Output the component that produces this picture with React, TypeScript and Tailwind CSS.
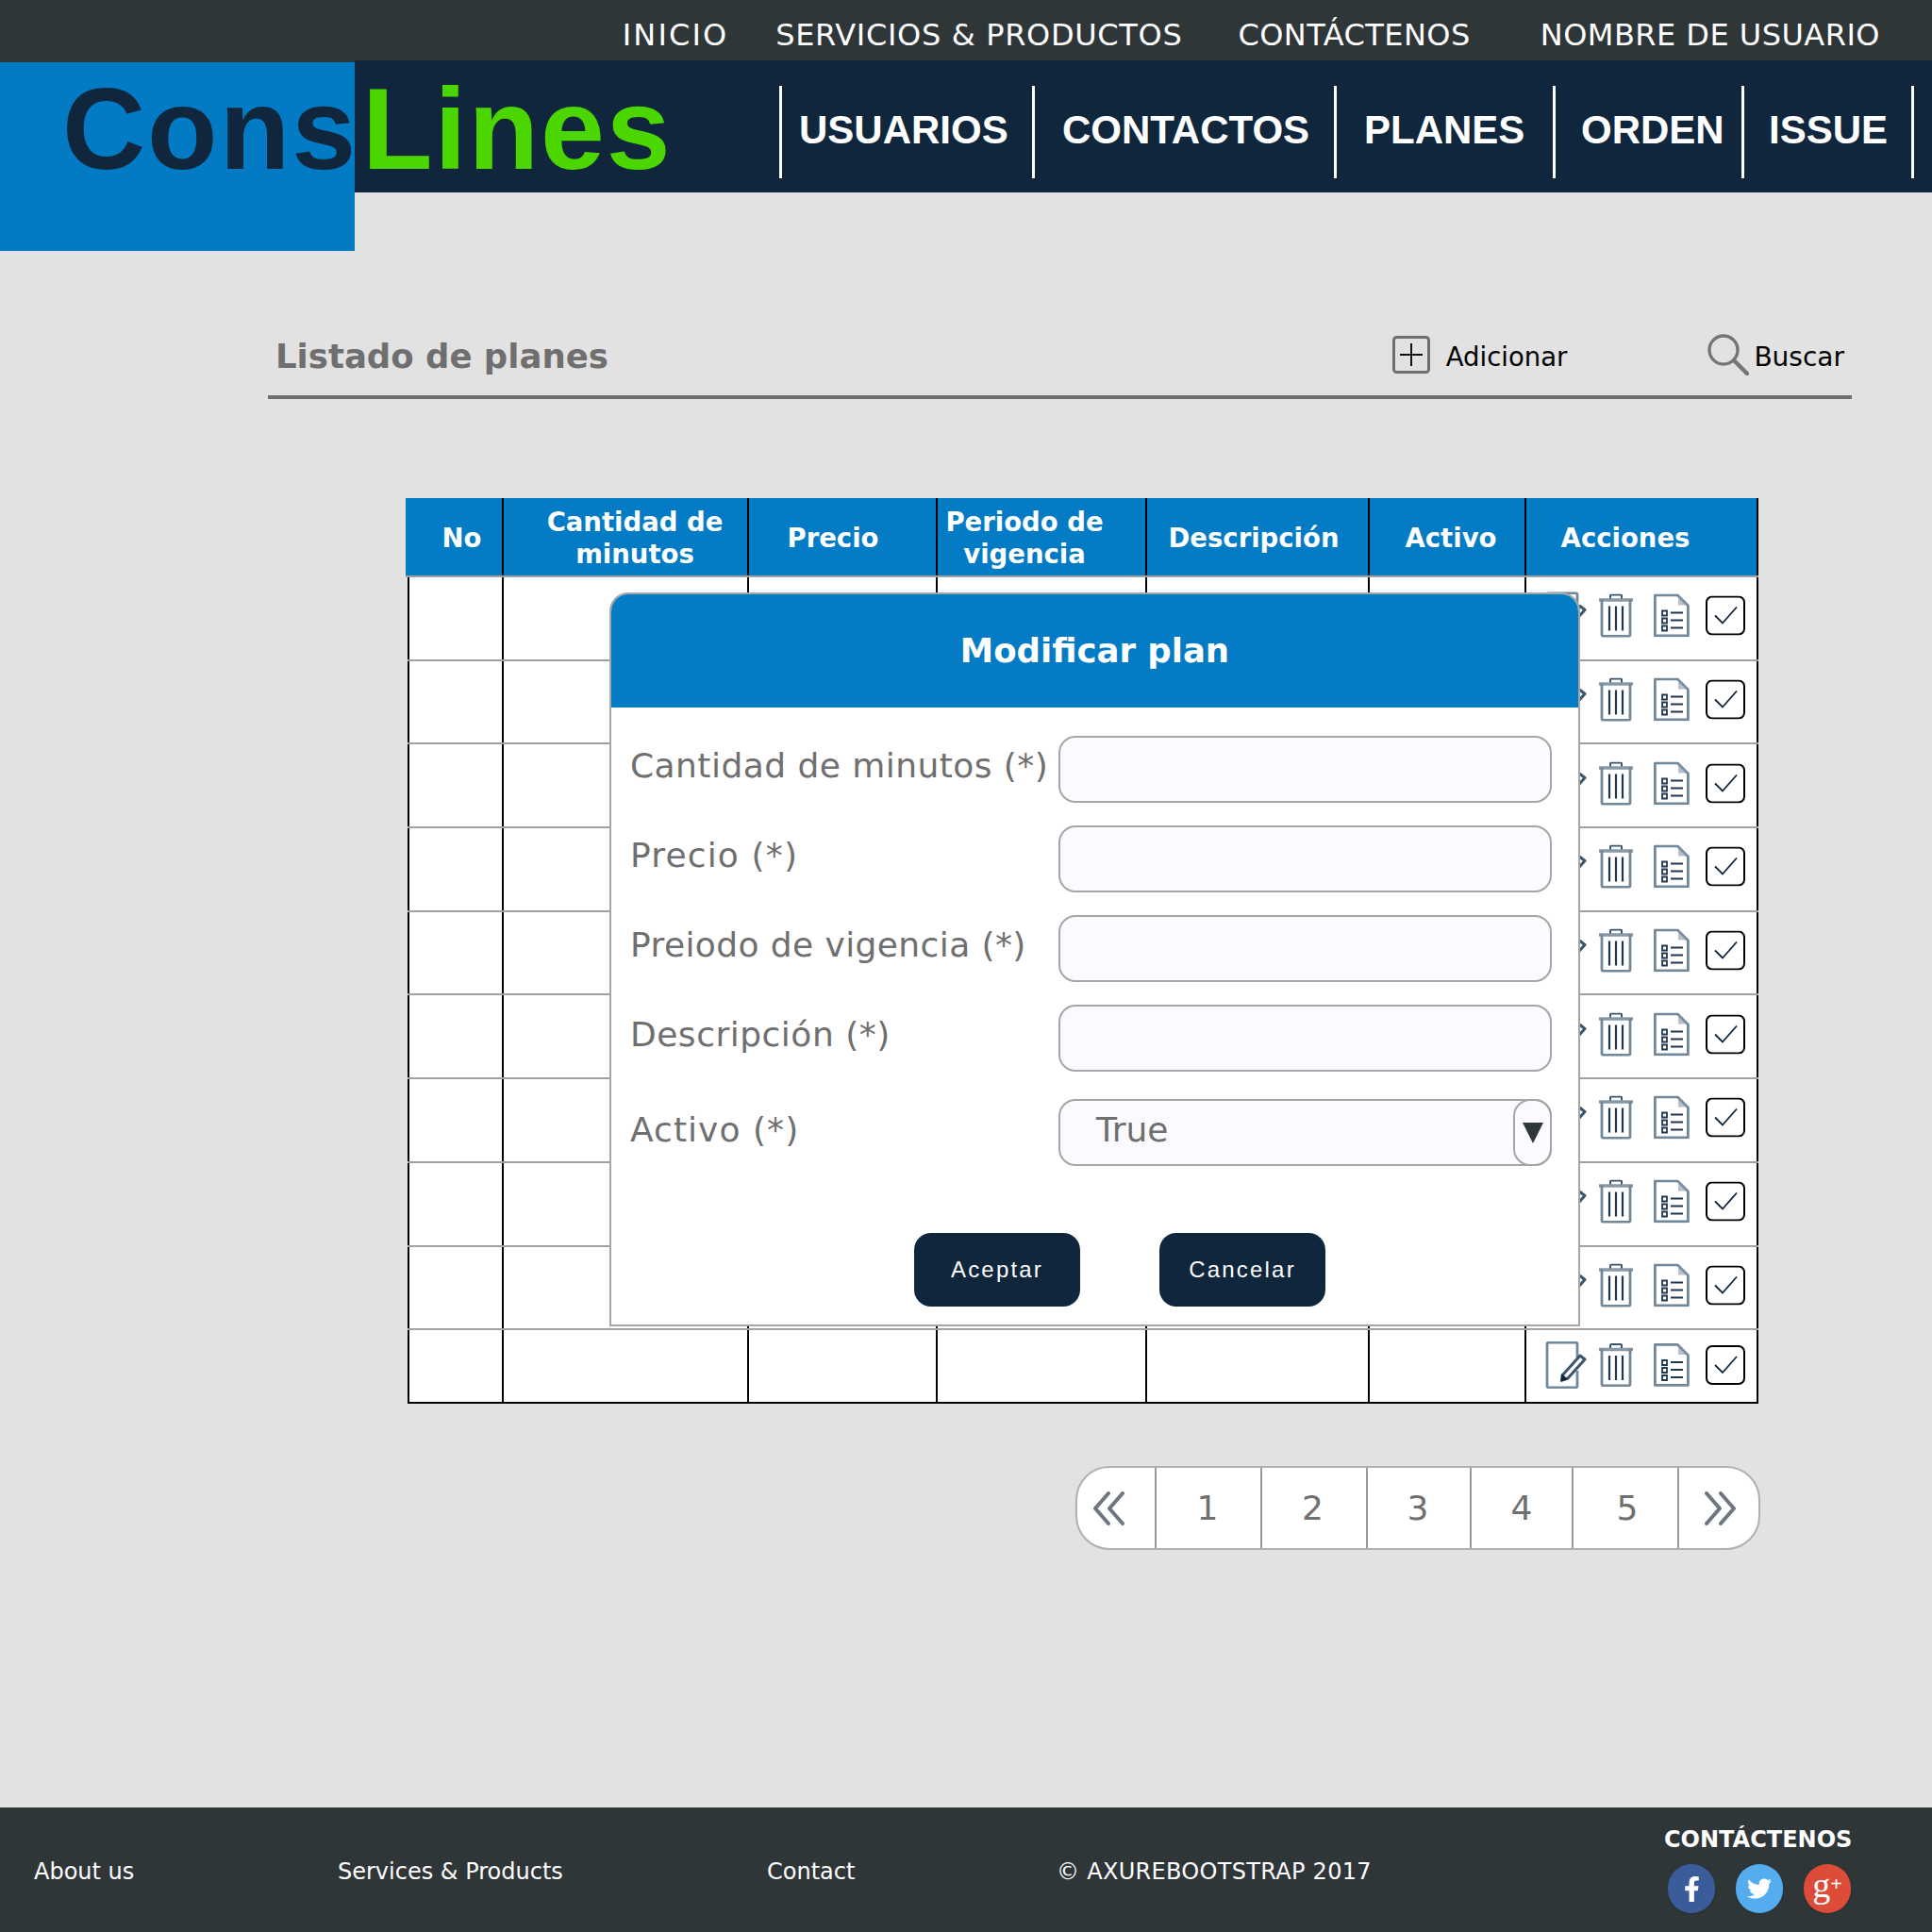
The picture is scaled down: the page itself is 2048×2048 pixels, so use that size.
import { FaFacebookF, FaTwitter } from 'react-icons/fa';

const topLinks = [
  { label: 'INICIO', cls: 'tracking-[2.1px]' },
  { label: 'SERVICIOS & PRODUCTOS', cls: 'ml-[50px] tracking-[0.67px]' },
  { label: 'CONTÁCTENOS', cls: 'ml-[59px] tracking-[0.45px]' },
  { label: 'NOMBRE DE USUARIO', cls: 'ml-[74px] tracking-[0.47px]' },
];

const navLinks = [
  { label: 'USUARIOS', cls: 'w-[268px] pl-[18px]' },
  { label: 'CONTACTOS', cls: 'w-[320px] pl-[29px]' },
  { label: 'PLANES', cls: 'w-[232px] pl-[29px]' },
  { label: 'ORDEN', cls: 'w-[200px] pl-[27px]' },
  { label: 'ISSUE', cls: 'w-[183px] pl-[26px] border-r-[3px]' },
];

const headerColumns = 'grid grid-cols-[104px_260px_200px_222px_236px_166px_246px]';
const bodyColumns = 'grid grid-cols-[102px_260px_200px_222px_236px_166px_246px]';

const headers = [
  { label: 'No', cls: 'pl-[17px] justify-center' },
  { label: 'Cantidad de minutos', cls: 'pl-[20px] justify-center' },
  { label: 'Precio', cls: 'pr-[20px] justify-center' },
  { label: 'Periodo de vigencia', cls: 'pr-[42px] justify-center' },
  { label: 'Descripción', cls: 'pr-[8px] justify-center' },
  { label: 'Activo', cls: 'pl-[8px] justify-center' },
  { label: 'Acciones', cls: 'pr-[34px] justify-center' },
];

const fields = [
  { label: 'Cantidad de minutos (*)', cls: 'mb-[24px]', text: 'tracking-[0.45px]' },
  { label: 'Precio (*)', cls: 'mb-[24px]', text: 'tracking-[1.15px]' },
  { label: 'Preiodo de vigencia (*)', cls: 'mb-[24px]', text: 'tracking-[0.4px]' },
  { label: 'Descripción (*)', cls: 'mb-[29px]', text: 'tracking-[0.5px]' },
];

const pages = [
  { n: '1', cls: 'w-[112px] pr-[2px]' },
  { n: '2', cls: 'w-[112px] pr-[3px]' },
  { n: '3', cls: 'w-[110px] pr-[2px]' },
  { n: '4', cls: 'w-[108px]' },
  { n: '5', cls: 'w-[112px] pl-[4px]' },
];

const EditIcon = () => (
  <svg width="44" height="50" viewBox="0 0 44 50" fill="none">
    <path d="M34 17V3a2 2 0 0 0-2-2H4a2 2 0 0 0-2 2v44a2 2 0 0 0 2 2h28a2 2 0 0 0 2-2V31" stroke="#71879a" strokeWidth="2.8" />
    <path d="M19 35l18-20 5 4-18 20-6 2z" fill="#fff" stroke="#3b556c" strokeWidth="3" strokeLinejoin="round" />
    <path d="M17 34l7 6-8 3z" fill="#10263c" />
  </svg>
);

const TrashIcon = () => (
  <svg width="36" height="46" viewBox="0 0 36 46" fill="none">
    <path d="M0 6.5h36" stroke="#8898a6" strokeWidth="3.4" />
    <path d="M12 5V2a1 1 0 0 1 1-1h10a1 1 0 0 1 1 1v3" stroke="#3b556c" strokeWidth="2" />
    <path d="M3 6v37a2 2 0 0 0 2 2h26a2 2 0 0 0 2-2V6" stroke="#71879a" strokeWidth="2.8" />
    <path d="M11 13v26M18 13v26M25 13v26" stroke="#1f3850" strokeWidth="2.2" />
  </svg>
);

const ListDocIcon = () => (
  <svg width="38" height="46" viewBox="0 0 38 46" fill="none">
    <path d="M1.4 1.4h24l11 11v32h-35z" stroke="#71879a" strokeWidth="2.8" strokeLinejoin="round" />
    <path d="M26 1v11h11z" fill="#8898a6" fillOpacity="0.6" />
    <path d="M9 18h5v5H9zM9 26h5v5H9zM9 34h5v5H9z" stroke="#1f3850" strokeWidth="1.8" />
    <path d="M18 20h13M18 28h13M18 36h13" stroke="#1f3850" strokeWidth="2.2" />
  </svg>
);

const CheckIcon = () => (
  <svg width="42" height="42" viewBox="0 0 42 42" fill="none">
    <rect x="1" y="1" width="40" height="40" rx="6" stroke="#000" strokeWidth="2" />
    <path d="M10 21l8 8 15-17" stroke="#10263c" strokeWidth="1.8" />
  </svg>
);

const PlusBoxIcon = () => (
  <svg width="40" height="40" viewBox="0 0 40 40" fill="none" className="-translate-y-[3px]">
    <rect x="1.5" y="1.5" width="37" height="37" rx="3" stroke="#6f6f6f" strokeWidth="3" />
    <path d="M20 8v24M8 20h24" stroke="#111" strokeWidth="2" />
  </svg>
);

const SearchIcon = () => (
  <svg width="44" height="44" viewBox="0 0 44 44" fill="none" className="-translate-y-[3px]">
    <circle cx="17" cy="17" r="15" stroke="#757575" strokeWidth="3.4" />
    <path d="M28 28l14 14" stroke="#757575" strokeWidth="4.4" strokeLinecap="round" />
  </svg>
);

const Chevrons = ({ flip }: { flip?: boolean }) => (
  <svg width="34" height="36" viewBox="0 0 34 36" fill="none" className={flip ? 'rotate-180' : ''}>
    <path d="M17 2L3 18l14 16M32 2L18 18l14 16" stroke="#6f7680" strokeWidth="4" strokeLinecap="round" strokeLinejoin="round" />
  </svg>
);

const TableRow = ({ last }: { last?: boolean }) => (
  <div className={`ml-[2px] ${bodyColumns} ${last ? 'h-[78px] border-b-2 border-black' : 'h-[88.7px] border-b-2 border-[#a0a0a0]'}`}>
    <div className="border-l-2 border-r-2 border-black bg-white" />
    <div className="border-r-2 border-black bg-white" />
    <div className="border-r-2 border-black bg-white" />
    <div className="border-r-2 border-black bg-white" />
    <div className="border-r-2 border-black bg-white" />
    <div className="border-r-2 border-black bg-white" />
    <div className="flex items-center justify-end border-r-2 border-black bg-white pr-[12px]">
      <div className={`flex items-center ${last ? '-translate-y-[1px]' : '-translate-y-[2.5px]'}`}>
        <EditIcon />
        <div className="ml-[13px]">
          <TrashIcon />
        </div>
        <div className="ml-[22px]">
          <ListDocIcon />
        </div>
        <div className="ml-[17px]">
          <CheckIcon />
        </div>
      </div>
    </div>
  </div>
);

const inputCls = 'h-[71px] w-[523px] rounded-[18px] border-2 border-[#a6a6a6] bg-[#fbfbff]';

export default function App() {
  return (
    <div className="flex h-[2048px] w-[2048px] flex-col bg-[#e2e2e2] font-['DejaVu_Sans',sans-serif]">
      {/* top links */}
      <div className="flex h-[64px] items-center justify-end bg-[#2f3638] pr-[55px] pt-[10px] text-[32px] text-white">
        {topLinks.map((l) => (
          <span key={l.label} className={l.cls}>
            {l.label}
          </span>
        ))}
      </div>

      {/* logo + nav */}
      <div className="flex h-[140px] bg-[#10263c]">
        <div className="z-10 h-[202px] w-[376px] shrink-0 border-t-2 border-[#2f3638] bg-[#027bc4] pl-[66px]">
          <div className="whitespace-nowrap pt-[1px] font-['Liberation_Sans',sans-serif] text-[122px] font-bold leading-[140px] tracking-[2px]">
            <span className="text-[#10263c]">Cons</span>
            <span className="ml-[5px] text-[#4bd600]">Lines</span>
          </div>
        </div>
        <div className="ml-[450px] flex h-[98px] translate-y-[27px] font-['Liberation_Sans',sans-serif] text-[42px] font-bold text-white">
          {navLinks.map((l) => (
            <div key={l.label} className={`flex items-center border-l-[3px] border-white pb-[5px] ${l.cls}`}>
              {l.label}
            </div>
          ))}
        </div>
      </div>

      <main className="flex-1 pl-[284px]">
        {/* title bar */}
        <div className="mt-[143px] flex h-[76px] w-[1679px] items-center border-b-4 border-[#6f6f6f] pb-[8px]">
          <h1 className="ml-[8px] flex-1 -translate-y-[1px] text-[35.5px] font-bold text-[#6f6f6f]">Listado de planes</h1>
          <PlusBoxIcon />
          <span className="ml-[17px] text-[27.5px] text-black">Adicionar</span>
          <div className="ml-[149px]">
            <SearchIcon />
          </div>
          <span className="ml-[5px] mr-[8px] text-[28px] text-black">Buscar</span>
        </div>

        {/* table */}
        <div className="relative ml-[146px] mt-[105px] w-[1434px]">
          <div className={`${headerColumns} h-[84px] border-b-[2px] border-[#a0a0a0] bg-[#047bc5]`}>
            {headers.map((h, i) => (
              <div
                key={h.label}
                className={`flex items-center border-r-2 border-black pt-[2px] text-center text-[27.5px] font-bold leading-[34px] text-white ${h.cls} ${i === 3 ? 'px-[6px]' : ''}`}
              >
                <span className={i === 1 || i === 3 ? 'max-w-[200px]' : ''}>{h.label}</span>
              </div>
            ))}
          </div>
          {Array.from({ length: 9 }).map((_, i) => (
            <TableRow key={i} />
          ))}
          <TableRow last />

          {/* modal */}
          <div className="absolute left-[216px] top-[100px] h-[778px] w-[1029px] overflow-hidden rounded-t-[20px] border-2 border-[#a6a6a6] bg-white">
            <div className="flex h-[120px] items-center justify-center bg-[#047bc5] text-[35.5px] font-bold text-white">
              Modificar plan
            </div>
            <div className="pl-[20px] pt-[30px] text-[36px] text-[#6f6f6f]">
              {fields.map((f) => (
                <div key={f.label} className={`flex items-center ${f.cls}`}>
                  <span className={`w-[454px] -translate-y-[4px] whitespace-nowrap ${f.text}`}>{f.label}</span>
                  <div className={inputCls} />
                </div>
              ))}
              <div className="flex items-center">
                <span className="w-[454px] -translate-y-[3px] tracking-[1.05px]">Activo (*)</span>
                <div className={`${inputCls} relative flex items-center pl-[38px]`}>
                  <span className="-translate-y-[3px]">True</span>
                  <div className="absolute -right-[2px] -top-[2px] flex h-[71px] w-[41px] items-center justify-center rounded-[18px] border-2 border-[#a6a6a6]">
                    <div className="h-0 w-0 border-x-[11px] border-t-[22px] border-x-transparent border-t-[#2f3638]" />
                  </div>
                </div>
              </div>
              <div className="mt-[71px] flex gap-[84px] pl-[301px] font-['Liberation_Sans',sans-serif] text-[24px] tracking-[2.2px] text-white">
                <button className="h-[78px] w-[176px] rounded-[18px] bg-[#10263c]">Aceptar</button>
                <button className="h-[78px] w-[176px] rounded-[18px] bg-[#10263c]">Cancelar</button>
              </div>
            </div>
          </div>
        </div>

        {/* pagination */}
        <div className="ml-[856px] mt-[66px] flex h-[89px] w-[726px] overflow-hidden rounded-[36px] border-2 border-[#b0b0b0] bg-white text-[36px] text-[#6f6f6f]">
          <div className="flex w-[84px] items-center justify-center border-r-2 border-[#9a9a9a] pr-[16px]">
            <Chevrons />
          </div>
          {pages.map((p) => (
            <div key={p.n} className={`flex items-center justify-center border-r-2 border-[#9a9a9a] ${p.cls}`}>
              {p.n}
            </div>
          ))}
          <div className="flex flex-1 items-center justify-center pl-[3px]">
            <Chevrons flip />
          </div>
        </div>
      </main>

      {/* footer */}
      <footer className="flex h-[132px] bg-[#2f3638] text-[24px] text-white">
        <div className="flex h-full items-center pt-[4px]">
          <span className="ml-[36px] w-[322px]">About us</span>
          <span className="w-[455px]">Services &amp; Products</span>
          <span className="w-[309px]">Contact</span>
          <span className="w-[642px] -translate-x-[2px] tracking-[0.3px]">© AXUREBOOTSTRAP 2017</span>
        </div>
        <div className="pt-[16px]">
          <div className="font-bold">CONTÁCTENOS</div>
          <div className="mt-[8px] flex gap-[22px] pl-[4px]">
            <div className="flex h-[52px] w-[50px] items-center justify-center rounded-full bg-[#3b5c9b] text-[27px] shadow-sm">
              <FaFacebookF />
            </div>
            <div className="flex h-[52px] w-[50px] items-center justify-center rounded-full bg-[#55acee] text-[26px] shadow-sm">
              <FaTwitter />
            </div>
            <div className="flex h-[52px] w-[50px] items-center justify-center rounded-full bg-[#dd4b39] font-['Liberation_Serif',serif] shadow-sm">
              <span className="-translate-y-[4px] text-[38px] leading-none">g</span>
              <span className="-translate-y-[5px] text-[22px] font-bold leading-none">+</span>
            </div>
          </div>
        </div>
      </footer>
    </div>
  );
}
